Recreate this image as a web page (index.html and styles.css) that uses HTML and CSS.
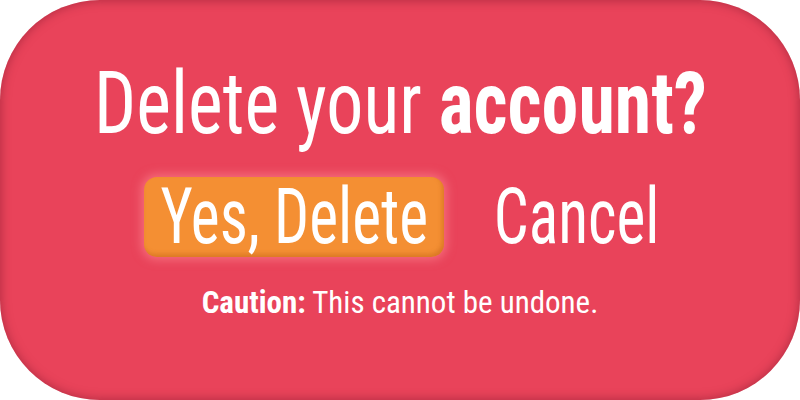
FILE: index.html
```html
<!DOCTYPE html>
<html>
<head>
<meta charset="utf-8">
<link rel="stylesheet" href="styles.css">
</head>
<body>
<div class="card">
  <h1 class="title"><span class="squeeze">Delete your <b>account?</b></span></h1>
  <div class="actions">
    <button class="btn btn-yes"><span class="squeeze">Yes, Delete</span></button>
    <button class="btn btn-cancel"><span class="squeeze">Cancel</span></button>
  </div>
  <p class="note"><b>Caution:</b> This cannot be undone.</p>
</div>
</body>
</html>
```
FILE: styles.css
```css
html, body {
  margin: 0;
  padding: 0;
  background: #ffffff;
}
.card {
  width: 800px;
  height: 400px;
  box-sizing: border-box;
  border-radius: 100px;
  background: #e9435a;
  box-shadow: inset 0 0 10px 1px rgba(130, 25, 45, 0.5);
  display: flex;
  flex-direction: column;
  align-items: center;
  font-family: Roboto, sans-serif;
  font-stretch: condensed;
  color: #ffffff;
  overflow: hidden;
}
.squeeze {
  display: inline-block;
  white-space: nowrap;
  transform-origin: center;
}
.title {
  margin: 58px 0 0;
  width: 100%;
  display: flex;
  justify-content: center;
  font-size: 87px;
  font-weight: 400;
  line-height: 90px;
}
.title .squeeze { transform: scaleX(0.85); }
.title b { font-weight: 700; }
.actions {
  display: flex;
  align-items: center;
  gap: 54px;
  margin-top: 29px;
}
.btn {
  display: flex;
  justify-content: center;
  align-items: center;
  font-family: inherit;
  font-stretch: condensed;
  color: #fff;
  border: none;
  font-size: 77px;
  line-height: 80px;
  padding: 0;
  background: none;
}
.btn .squeeze { transform: scaleX(0.80); }
.btn-yes {
  width: 300px;
  height: 80px;
  background: #f48f33;
  border-radius: 13px;
  box-shadow: 0 0 10px 3px rgba(255, 140, 150, 0.55), inset -2px -3px 4px rgba(190, 95, 20, 0.45);
}
.btn-cancel {
  width: 158px;
  height: 80px;
}
.note {
  margin: 29px 0 0;
  font-size: 31px;
  line-height: 34px;
  white-space: nowrap;
}
.note b { font-weight: 700; }
```
